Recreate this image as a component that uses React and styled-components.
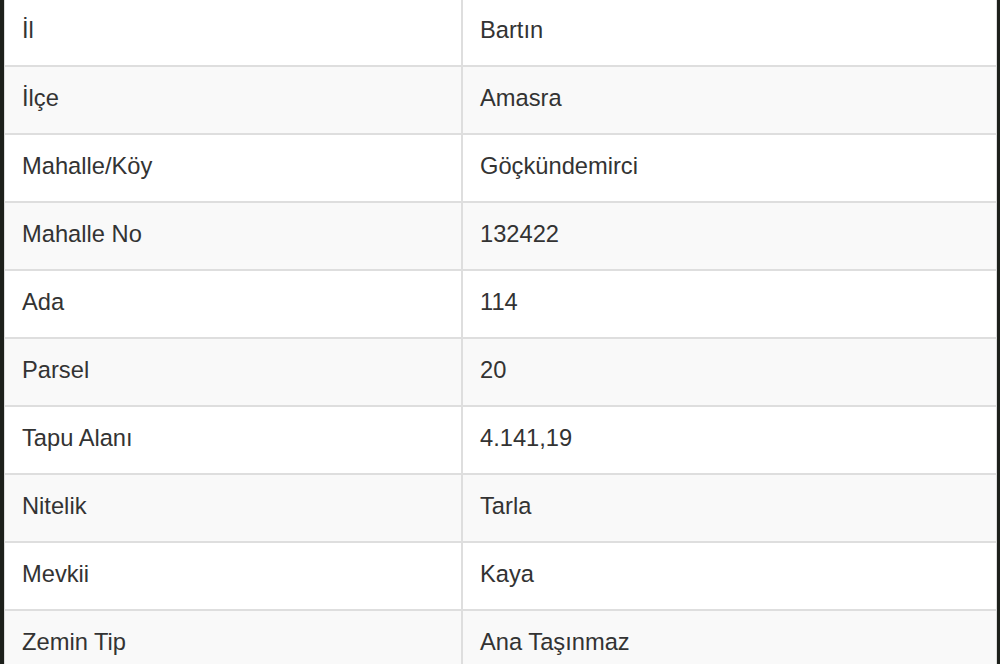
import React from "react";
import styled, { createGlobalStyle } from "styled-components";

const Global = createGlobalStyle`
  html, body {
    margin: 0;
    padding: 0;
    background: #1d201b;
    overflow: hidden;
  }
`;

const Frame = styled.div`
  padding: 0 3px 0 4px;
  margin-top: -1px;
`;

const Table = styled.div`
  background: #fff;
  border-left: 1px solid #dcdcdc;
  border-right: 1px solid #dcdcdc;
  font-family: "Liberation Sans", Arial, sans-serif;
  font-size: 23.7px;
  color: #333;
`;

const Row = styled.div`
  display: grid;
  grid-template-columns: 456px 1fr;
  height: 66px;
  border-bottom: 2px solid #dedede;
  background: ${(p) => (p.$striped ? "#f9f9f9" : "#fff")};
`;

const Cell = styled.div`
  display: flex;
  align-items: center;
  padding: 0 0 4px 17px;
  border-left: ${(p) => (p.$first ? "none" : "2px solid #dedede")};
`;

const rows = [
  ["İl", "Bartın"],
  ["İlçe", "Amasra"],
  ["Mahalle/Köy", "Göçkündemirci"],
  ["Mahalle No", "132422"],
  ["Ada", "114"],
  ["Parsel", "20"],
  ["Tapu Alanı", "4.141,19"],
  ["Nitelik", "Tarla"],
  ["Mevkii", "Kaya"],
  ["Zemin Tip", "Ana Taşınmaz"],
];

export default function App() {
  return (
    <Frame>
      <Global />
      <Table>
        {rows.map(([k, v], i) => (
          <Row key={k} $striped={i % 2 === 1}>
            <Cell $first>{k}</Cell>
            <Cell>{v}</Cell>
          </Row>
        ))}
      </Table>
    </Frame>
  );
}
